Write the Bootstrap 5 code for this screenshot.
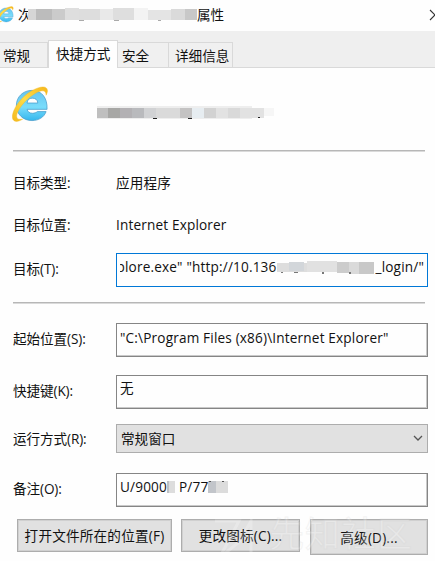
<!DOCTYPE html>
<html lang="zh-CN">
<head>
<meta charset="utf-8">
<meta name="viewport" content="width=device-width, initial-scale=1">
<title>属性</title>
<link href="https://cdn.jsdelivr.net/npm/bootstrap@5.3.0/dist/css/bootstrap.min.css" rel="stylesheet">
<style>
body{font-family:"Open Sans","Noto Sans CJK SC",sans-serif;font-size:13.6px;line-height:20px;color:#111;background:#fefefe;width:435px;height:561px;overflow:hidden;white-space:nowrap}
svg{display:block;flex:none}
.titlebar{height:31px;padding:0 0 2px}
.titlebar .glyph{width:10px;height:20px}
.titlebar .redact{position:relative;background:#fefefe}
.tabstrip{height:37px;background:#efefef;border-bottom:1px solid #d9d9d9}
.tabstrip .nav-link{height:25px;padding:3px 0 0;border:1px solid #d9d9d9;border-width:1px 1px 0 0;border-radius:0;background:#f0f0f0;color:#111;line-height:20px}
.tabstrip .nav-link.active{height:28px;background:#fefefe;margin-bottom:-1px;border-left-width:1px;color:#111}
.t1{width:48px;padding-left:3px!important}.t2{width:70px;padding-left:7px!important}.t3{width:51px;padding-left:4px!important}.t4{width:64px;padding-left:6px!important}
.head{height:82px;padding-left:12px}
.rule{height:2px;background:#b7b7b7;margin:0 10px 0 13px;border-bottom:1px solid #dadada}
.prop{padding-left:13px;padding-right:7px}
.prop .lbl{width:103px;flex:none;letter-spacing:-.1px}
.prop .up{margin-bottom:3px}
.val{letter-spacing:.16px}
.gap-kind{margin-top:21px}.gap-place{margin-top:22px}.gap-target{margin-top:18px}.gap-rule{margin-top:15px}.gap-start{margin-top:19px}.gap-key{margin-top:18px}.gap-run{margin-top:15px}.gap-note{margin-top:20px}
.field{flex:1;min-width:0;height:34px;border:1px solid #858585;background:#fefefe;padding:4px 3px;overflow:hidden;letter-spacing:.17px;box-shadow:inset -1px -1px #c9c9c9}
.field.focus{border-color:#0078d7;box-shadow:none}
.field.raised{padding-top:3px}
.field.high{padding-top:2px}
.combo{height:29px;background:#e1e1e1;border-color:#adadad;padding:4px;letter-spacing:0;box-shadow:none}
.btn-sys{background:#e1e1e1;border:1px solid #adadad;border-radius:0;padding:0;height:33px;font-size:13.6px;letter-spacing:.2px;line-height:31px;color:#111;box-shadow:inset 0 0 0 1px #d0d0d0}
.b1{width:155px}.b2{width:119px}.b3{width:118px;height:36px;line-height:35px;margin-left:1px}
.actions{padding-left:17px;margin-top:12px;gap:9px}
.stamp{left:215px;top:512px;color:#fff;opacity:.25;pointer-events:none}
.stamp span{font-size:35px;line-height:44px;letter-spacing:1px;-webkit-text-stroke:1px #d6d6d6}
</style>
<script src="https://cdn.jsdelivr.net/npm/bootstrap@5.3.0/dist/js/bootstrap.bundle.min.js"></script>
</head>
<body class="position-relative">
<svg width="0" height="0" class="position-absolute">
<defs>
<linearGradient id="blue" x1="0" y1="0" x2="0" y2="1"><stop offset="0" stop-color="#65c4ef"/><stop offset=".55" stop-color="#79dcfb"/><stop offset="1" stop-color="#35b7ed"/></linearGradient>
<linearGradient id="gold" x1="0" y1="1" x2="1" y2="0"><stop offset="0" stop-color="#f5b91c"/><stop offset=".5" stop-color="#ffdc48"/><stop offset="1" stop-color="#f6b61b"/></linearGradient>
<symbol id="ie" viewBox="0 0 38 38">
<path d="M36 24H15.500C16 26.500 18 28 21 28C23 28 25 27.300 26 26.300H35C33 32 27.500 35.500 20.500 35.500C11.500 35.500 4.500 29 4.500 20C4.500 11 11.500 4.500 20.500 4.500C30.500 4.500 36.500 12 36 24ZM15.500 17.500H26.500C26.300 14 24 12.500 20.800 12.500C17.500 12.500 15.800 14.200 15.500 17.500Z" fill="url(#blue)" stroke="#4a9dcc" stroke-width=".8" fill-rule="evenodd"/>
<path d="M35 9.500C38 4 36 .8 31.500 1C26 1.300 17 5.500 9.500 13.500C2 22-1 30.500 1 34.500C3 37.500 7 36.500 11 34C7.500 34.700 5.500 34 4.900 32C4 29 8 21.500 14.500 15C21 8.700 28.500 4.300 32 5C34.300 5.300 34.900 7 35 9.500Z" fill="url(#gold)" stroke="#f0b51b" stroke-width=".4"/>
</symbol>
</defs>
</svg>

<header class="titlebar d-flex align-items-center">
<svg width="14" height="18"><use href="#ie" x="-3" y="0" width="17" height="17"/></svg>
<span class="glyph ms-1">次</span>
<svg class="redact" width="169" height="17"><path fill="#d6d6d6" d="M0 3H18V14H0Z"/><path fill="#bcbcbc" d="M8 3h16v11H8z"/><path fill="#cbcbcb" d="M24 3h13v11H24z"/><path fill="#dedede" d="M37 2h14v12H37zM85 2h21v12H85z"/><path fill="#ddd" d="M51 3h21v11H51z"/><path fill="#e9e9e9" d="M72 3h13v11H72z"/><path fill="#f3f3f3" d="M106 2h14v12H106z"/><path fill="#e4e4e4" d="M120 4h23v10H120z"/><path fill="#dadada" d="M143 3h14v11H143z"/><path fill="#c8c8c8" d="M157 3h12v11H157z"/><path fill="#aaa" d="M51 14h5v1h-5zM86 14h5v1h-5zM130 14h3v1h-3z"/></svg>
<span>属性</span>
<svg class="ms-auto" width="6" height="12" viewBox="0 0 6 12"><path d="M1 1L11 11M1 11L6 6L11 1" fill="none" stroke="#333" stroke-width="1.1"/></svg>
</header>

<nav class="tabstrip nav d-flex align-items-end">
<a class="nav-link t1">常规</a><a class="nav-link active t2">快捷方式</a><a class="nav-link t3">安全</a><a class="nav-link t4">详细信息</a>
</nav>

<main>
<div class="head d-flex align-items-center">
<svg width="37" height="38" class="mb-2"><use href="#ie" width="37" height="37"/></svg>
<svg width="182" height="16" class="ms-5 mt-2" viewBox="1 0 182 16"><path d="M0 3l2 1M0 12l2-1" stroke="#875d29"/><path fill="#eee" d="M0 1h156v13H0z"/><path fill="#bfbfbf" d="M0 3h12v10H0z"/><path fill="#a7a7a5" d="M12 3h12v10H12z"/><path fill="#b3b1b4" d="M24 3h12v10H24z"/><path fill="#b9babd" d="M36 3h12v10H36z"/><path fill="#d1d2d4" d="M48 3h12v10H48z"/><path fill="#dadada" d="M60 3h24v10H60z"/><path fill="#c4c3c3" d="M84 3h12v10H84z"/><path fill="#e7edf1" d="M96 3h12v10H96z"/><path fill="#d2d2d2" d="M108 3h12v10h-12z"/><path fill="#e2e2e2" d="M120 3h12v10h-12zM144 3h24v10h-24z"/><path fill="#d9d9d9" d="M132 3h12v10h-12z"/><path fill="#f6f6f6" d="M168 3h10v8h-10z"/><path fill="#222" d="M57 13h4v1h-4zM92 13h4v1h-4zM162 12h2v1h-2z"/></svg>
</div>
<div class="rule"></div>
<div class="prop d-flex gap-kind"><span class="lbl">目标类型:</span><span class="val">应用程序</span></div>
<div class="prop d-flex gap-place"><span class="lbl">目标位置:</span><span class="val">Internet Explorer</span></div>
<div class="prop d-flex align-items-center gap-target"><span class="lbl up">目标(T):</span>
<div class="field focus raised"><div class="d-flex justify-content-end overflow-hidden"><span>plore.exe" "http://10.136</span><svg width="99" height="20"><path fill="#ddd" d="M0 6h30v9H0z"/><path fill="#d2d6da" d="M12 5h15v9H12z"/><path fill="#e1e1e1" d="M30 4h30v11H30z"/><path fill="#ccc" d="M60 5h12v11H60z"/><path fill="#dadada" d="M72 5h12v12H72z"/><path fill="#c8c8c8" d="M82 5h15v12H82z"/><path fill="#777" d="M4 15h2v1h-2zM17 15h4v1h-4zM45 15h2v2h-2zM72 15h2v2h-2z"/></svg><span>_login/"</span></div></div></div>
<div class="rule gap-rule"></div>
<div class="prop d-flex align-items-center gap-start"><span class="lbl up">起始位置(S):</span><div class="field">"C:\Program Files (x86)\Internet Explorer"</div></div>
<div class="prop d-flex align-items-center gap-key"><span class="lbl up">快捷键(K):</span><div class="field high">无</div></div>
<div class="prop d-flex align-items-center gap-run"><span class="lbl">运行方式(R):</span><div class="field combo d-flex justify-content-between"><span>常规窗口</span><svg width="10" height="18"><path d="M1 7L5 11L9 7" fill="none" stroke="#555" stroke-width="1.3"/></svg></div></div>
<div class="prop d-flex align-items-center gap-note"><span class="lbl up">备注(O):</span><div class="field raised d-flex"><span>U/9000</span><svg width="12" height="18"><path fill="#bec0c4" d="M-3 4h5v12H-3z"/><path fill="#ddd" d="M2 4h6v12H2z"/></svg><span>P/77</span><svg width="22" height="18"><path fill="#c2c5ca" d="M0 4h8v12H0z"/><path fill="#dcdcdc" d="M8 4h12v12H8z"/><path fill="#555" d="M1 4h2v1h-2zM14 4h2v1h-2z"/></svg></div></div>
<div class="actions d-flex align-items-start">
<button class="btn btn-sys b1">打开文件所在的位置(F)</button><button class="btn btn-sys b2">更改图标(C)...</button><button class="btn btn-sys b3">高级(D)...</button>
</div>
</main>
<div class="stamp position-absolute d-flex"><svg width="54" height="50"><path d="M0 9H24L6 43M8 43L24 30L36 9V42H20" fill="none" stroke="#fff" stroke-width="3"/></svg><span>先知社区</span></div>
</body>
</html>
